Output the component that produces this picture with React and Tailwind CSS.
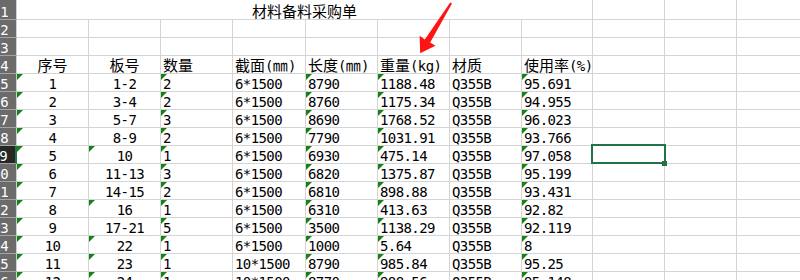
import React from 'react'
import clsx from 'clsx'

// column widths incl. right gridline (A..K)
const W = ['w-[72px]', 'w-[72px]', 'w-[72px]', 'w-[73px]', 'w-[72px]', 'w-[72px]', 'w-[72px]', 'w-[71px]', 'w-[72px]', 'w-[72px]', 'w-[72px]']

const rows = [
  ['1', '1-2', '2', '6*1500', '8790', '1188.48', 'Q355B', '95.691'],
  ['2', '3-4', '2', '6*1500', '8760', '1175.34', 'Q355B', '94.955'],
  ['3', '5-7', '3', '6*1500', '8690', '1768.52', 'Q355B', '96.023'],
  ['4', '8-9', '2', '6*1500', '7790', '1031.91', 'Q355B', '93.766'],
  ['5', '10', '1', '6*1500', '6930', '475.14', 'Q355B', '97.058'],
  ['6', '11-13', '3', '6*1500', '6820', '1375.87', 'Q355B', '95.199'],
  ['7', '14-15', '2', '6*1500', '6810', '898.88', 'Q355B', '93.431'],
  ['8', '16', '1', '6*1500', '6310', '413.63', 'Q355B', '92.82'],
  ['9', '17-21', '5', '6*1500', '3500', '1138.29', 'Q355B', '92.119'],
  ['10', '22', '1', '6*1500', '1000', '5.64', 'Q355B', '8'],
  ['11', '23', '1', '10*1500', '8790', '985.84', 'Q355B', '95.25'],
  ['12', '24', '1', '10*1500', '8770', '988.56', 'Q355B', '95.148'],
]

const heads = ['序号', '板号', '数量', '截面(㎜)', '长度(㎜)', '重量(kg)', '材质', '使用率(%)']

const CJK = /[\u3000-\u9fff\u3300-\u33ff\uff00-\uffef]/

function Txt({ text, className }) {
  if (!text) return null
  const parts = text.match(/[\u3000-\u9fff\u3300-\u33ff\uff00-\uffef]+|[^\u3000-\u9fff\u3300-\u33ff\uff00-\uffef]+/g)
  return (
    <span className={clsx("whitespace-nowrap font-['DejaVu_Sans_Mono',monospace] text-[14px] leading-none", className)}>
      {parts.map((p, i) =>
        CJK.test(p) ? (
          <span key={i} className="font-['Noto_Sans_CJK_SC',sans-serif] text-[15px] leading-none">{p}</span>
        ) : (
          <span key={i} className="tracking-[-0.6px]">{p}</span>
        )
      )}
    </span>
  )
}

function RowHead({ n, active }) {
  return (
    <div
      className={clsx(
        'flex w-[17px] shrink-0 items-end justify-end overflow-hidden border-b border-b-[#a3a3a3] pr-[8px] text-white',
        active ? 'border-r-2 border-r-[#217346] bg-[#262626]' : 'border-r border-r-[#cfcfcf] bg-[#6b6b6b]'
      )}
    >
      <Txt text={String(n)} />
    </div>
  )
}

function Cell({ w, text, center, tri, children }) {
  return (
    <div
      className={clsx(
        'relative flex shrink-0 items-end border-r border-b border-[#d4d4d4] text-black',
        w,
        center ? 'justify-center' : 'pl-[2px]'
      )}
    >
      {tri && (
        <span className="absolute left-0 top-0 h-0 w-0 border-t-[6px] border-r-[6px] border-t-[#148214] border-r-transparent" />
      )}
      <Txt text={text} />
      {children}
    </div>
  )
}

function Selection() {
  return (
    <>
      <div className="absolute left-[-2px] top-[-2px] z-10 h-[20px] w-[75px] border-2 border-[#217346]" />
      <div className="absolute left-[69px] top-[15px] z-20 h-[5px] w-[5px] bg-[#217346]" />
    </>
  )
}

export default function App() {
  return (
    <div className="relative h-[280px] w-[800px] overflow-hidden bg-white">
      {/* row 1: merged title A1:H1 */}
      <div className="flex h-[20px]">
        <RowHead n={1} />
        <div className="flex w-[576px] shrink-0 items-end justify-center border-r border-b border-[#d4d4d4]">
          <Txt text="材料备料采购单" />
        </div>
        {W.slice(8).map((w, i) => (
          <Cell key={i} w={w} />
        ))}
      </div>

      {[2, 3].map((n) => (
        <div key={n} className="flex h-[18px]">
          <RowHead n={n} />
          {W.map((w, i) => (
            <Cell key={i} w={w} />
          ))}
        </div>
      ))}

      <div className="flex h-[18px]">
        <RowHead n={4} />
        {W.map((w, i) => (
          <Cell key={i} w={w} text={heads[i]} center={i < 2} />
        ))}
      </div>

      {rows.map((r, ri) => (
        <div key={ri} className="flex h-[18px]">
          <RowHead n={ri + 5} active={ri + 5 === 9} />
          {W.map((w, i) => (
            <Cell
              key={i}
              w={w}
              text={r[i]}
              center={i < 2}
              tri={i === 0 || i === 2 || i === 4 || i === 5 || i === 7 || (i === 1 && !r[1].includes('-'))}
            >
              {ri + 5 === 9 && i === 8 && <Selection />}
            </Cell>
          ))}
        </div>
      ))}

      {/* red annotation arrow */}
      <svg className="pointer-events-none absolute left-0 top-0" width="800" height="280" viewBox="0 0 800 280">
        <polygon
          points="450.2,2.4 452,3.6 430.2,42.6 435.4,45.8 420.2,53.2 419.6,35.8 424.8,39.4"
          fill="#ff1414"
        />
      </svg>
    </div>
  )
}
